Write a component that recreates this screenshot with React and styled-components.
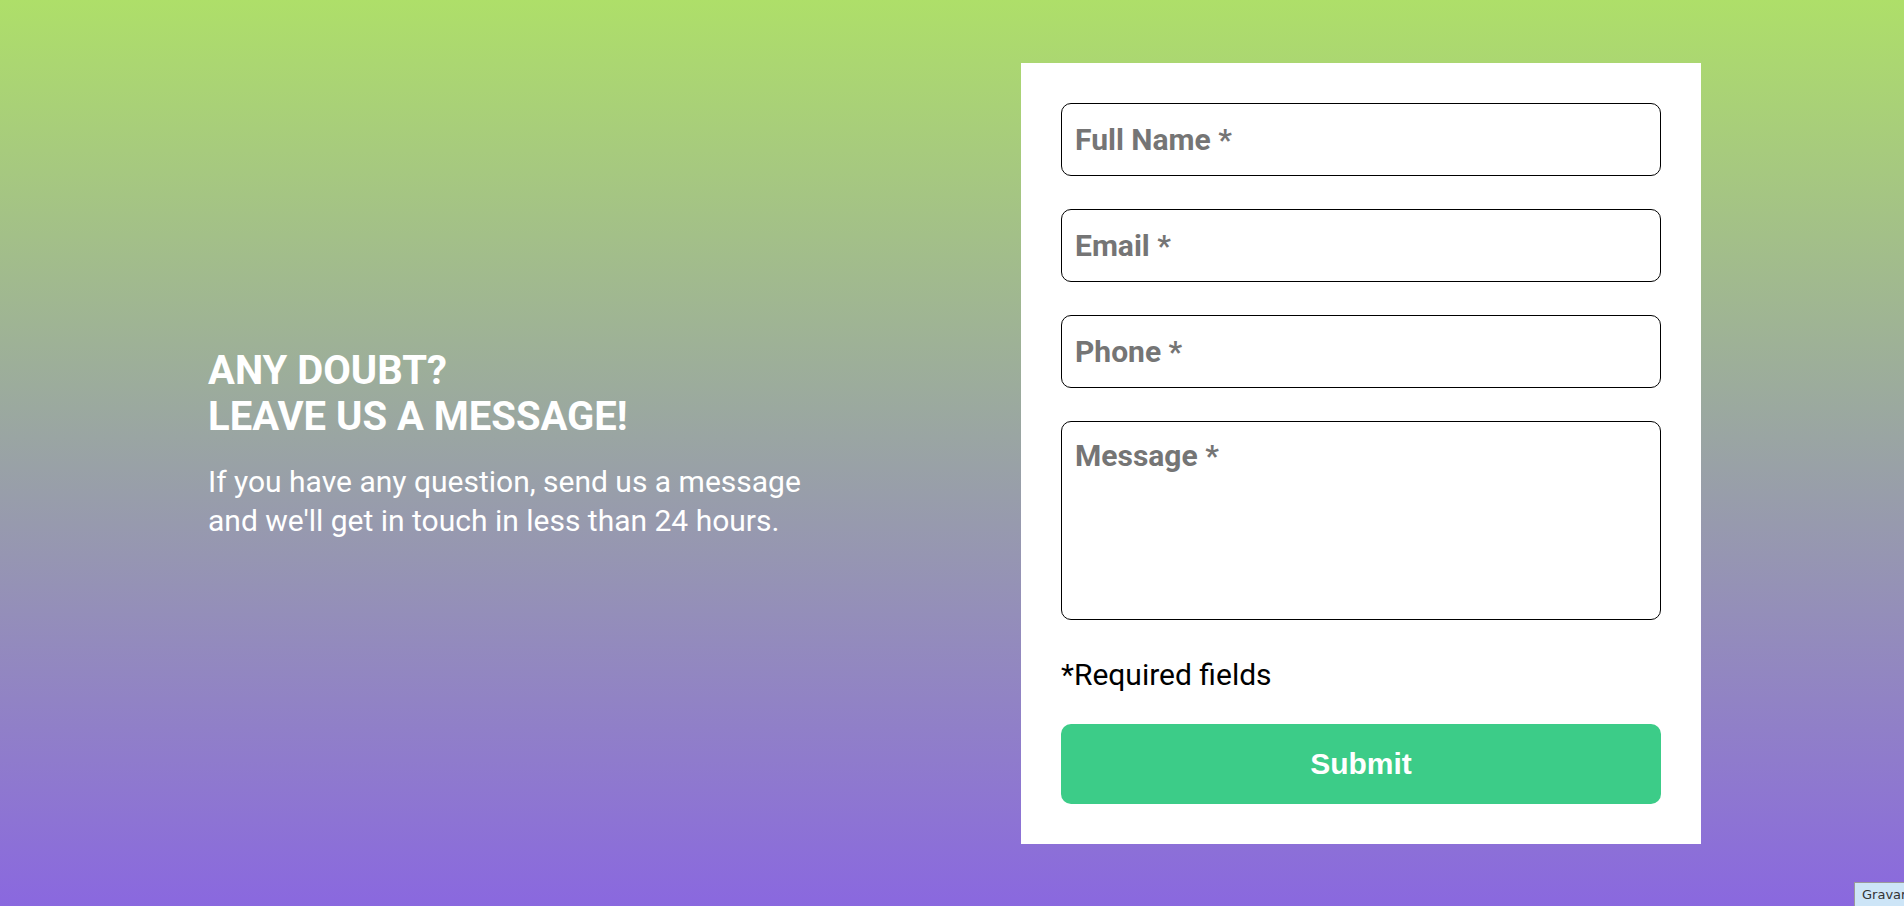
import styled, { createGlobalStyle } from "styled-components";

export default function App() {
  return (
    <>
      <GlobalStyle />
      <Page>
        <Intro>
          <Title>
            ANY DOUBT?
            <br />
            LEAVE US A MESSAGE!
          </Title>
          <Text>
            If you have any question, send us a message
            <br />
            and we'll get in touch in less than 24 hours.
          </Text>
        </Intro>
        <Card>
          <Form onSubmit={(e) => e.preventDefault()}>
            <Input type="text" placeholder="Full Name *" />
            <Input type="email" placeholder="Email *" />
            <Input type="tel" placeholder="Phone *" />
            <TextArea placeholder="Message *" />
            <Required>*Required fields</Required>
            <SubmitButton type="submit">Submit</SubmitButton>
          </Form>
        </Card>
      </Page>
      <RecordBadge>Gravar</RecordBadge>
    </>
  );
}

const GlobalStyle = createGlobalStyle`
  * {
    box-sizing: border-box;
  }
  body {
    margin: 0;
    font-family: "Roboto", "Liberation Sans", sans-serif;
    overflow: hidden;
  }
`;

const Page = styled.div`
  width: 100%;
  height: 100vh;
  display: flex;
  align-items: center;
  justify-content: space-between;
  padding: 0 203px 0 208px;
  background: linear-gradient(180deg, #aedf69 0%, #9ba99f 45%, #8a68df 100%);
`;

const Intro = styled.div`
  display: flex;
  flex-direction: column;
  color: #ffffff;
`;

const Title = styled.h1`
  margin: 0;
  font-family: "Roboto", sans-serif;
  font-weight: 700;
  font-size: 40px;
  line-height: 46px;
  color: #ffffff;
`;

const Text = styled.p`
  margin: 22px 0 19px;
  font-family: "Roboto", sans-serif;
  font-weight: 400;
  font-size: 30px;
  line-height: 39px;
  color: #ffffff;
`;

const Card = styled.div`
  width: 680px;
  background-color: #ffffff;
  padding: 40px;
`;

const Form = styled.form`
  display: flex;
  flex-direction: column;
`;

const fieldStyles = `
  width: 100%;
  border: 1px solid #000000;
  border-radius: 10px;
  padding: 0 13px;
  font-family: "Roboto", sans-serif;
  font-weight: 700;
  font-size: 30px;
  color: #333333;
  background: #ffffff;
  outline: none;
  &::placeholder {
    color: #757575;
  }
`;

const Input = styled.input`
  ${fieldStyles}
  height: 73px;
  margin-bottom: 33px;
`;

const TextArea = styled.textarea`
  ${fieldStyles}
  height: 199px;
  padding-top: 16px;
  resize: none;
`;

const Required = styled.p`
  margin: 37px 0 32px;
  font-family: "Roboto", sans-serif;
  font-size: 30px;
  color: #000000;
`;

const SubmitButton = styled.button`
  width: 100%;
  height: 80px;
  border: none;
  border-radius: 10px;
  background-color: #3ccc88;
  color: #ffffff;
  font-family: "Liberation Sans", Arial, sans-serif;
  font-weight: 700;
  font-size: 30px;
  cursor: pointer;
`;

const RecordBadge = styled.div`
  position: fixed;
  left: 1854px;
  top: 882px;
  padding: 4px 7px;
  background-color: #cde5f7;
  border: 1px solid #9a9a9a;
  font-family: "DejaVu Sans", sans-serif;
  font-size: 13px;
  color: #333333;
  white-space: nowrap;
`;
